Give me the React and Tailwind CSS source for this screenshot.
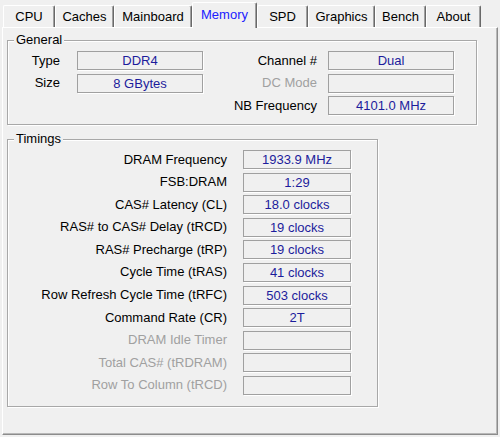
import React from 'react';

const tabs = [
  ['CPU', 52],
  ['Caches', 59],
  ['Mainboard', 78],
  ['Memory', 65, true],
  ['SPD', 51],
  ['Graphics', 67],
  ['Bench', 51],
  ['About', 55],
];

const timings = [
  ['DRAM Frequency', '1933.9 MHz'],
  ['FSB:DRAM', '1:29'],
  ['CAS# Latency (CL)', '18.0 clocks'],
  ['RAS# to CAS# Delay (tRCD)', '19 clocks'],
  ['RAS# Precharge (tRP)', '19 clocks'],
  ['Cycle Time (tRAS)', '41 clocks'],
  ['Row Refresh Cycle Time (tRFC)', '503 clocks'],
  ['Command Rate (CR)', '2T'],
  ['DRAM Idle Timer', '', true],
  ['Total CAS# (tRDRAM)', '', true],
  ['Row To Column (tRCD)', '', true],
];

function Field({ value, width }) {
  return (
    <div
      className="h-[19px] flex items-center justify-center border border-[#a0a0a0] shadow-[1px_1px_0_#ffffff] text-[#1c1c9c] leading-none"
      style={{ width }}
    >
      {value}
    </div>
  );
}

function Row({ label, value, disabled, labelW, gap, boxW }) {
  return (
    <div className="flex items-center h-[19px]">
      <div
        className={`text-right whitespace-nowrap ${disabled ? 'text-[#a0a0a0]' : 'text-black'}`}
        style={{ width: labelW, marginRight: gap }}
      >
        {label}
      </div>
      <Field value={value} width={boxW} />
    </div>
  );
}

function Group({ title, className, children }) {
  return (
    <fieldset
      className={`border border-[#a8a8a8] shadow-[1px_1px_0_#ffffff,inset_1px_1px_0_#ffffff] ${className}`}
    >
      <legend className="ml-[6px] px-[2px] h-[16px] leading-[16px] bg-[#f0f0f0] text-black">
        {title}
      </legend>
      {children}
    </fieldset>
  );
}

export default function App() {
  return (
    <div
      className="w-[500px] h-[437px] bg-[#f0f0f0] text-[13px] leading-[16px] overflow-hidden"
      style={{ fontFamily: '"Liberation Sans", Arial, sans-serif' }}
    >
      {/* tab strip */}
      <div className="flex items-end h-[28px] pl-[3px] relative z-10">
        {tabs.map(([name, w, sel]) => (
          <div
            key={name}
            className={`flex items-center justify-center border-l border-t border-white border-r border-r-[#696969] rounded-t-[2px] shadow-[inset_-1px_0_0_#a0a0a0] bg-[#f0f0f0] ${
              sel ? 'h-[26px] pb-[2px] text-[#2020ff]' : 'h-[22px] mb-[1px] pt-[1px] text-black'
            }`}
            style={{ width: w }}
          >
            {name}
          </div>
        ))}
      </div>

      {/* tab panel */}
      <div className="ml-[2px] -mt-[1px] w-[496px] h-[408px] border-l border-t border-white border-r border-b border-r-[#8c8c8c] border-b-[#8c8c8c] shadow-[inset_-1px_-1px_0_#b8b8b8]">
        <Group title="General" className="ml-[4px] mt-[4px] w-[470px]">
          <div className="flex pt-[3px] pb-[9px]">
            <div className="flex flex-col gap-[3.5px]">
              <Row label="Type" value="DDR4" labelW={52} gap={17} boxW={126} />
              <Row label="Size" value="8 GBytes" labelW={52} gap={17} boxW={126} />
            </div>
            <div className="flex flex-col gap-[3.5px] ml-[14px]">
              <Row label="Channel #" value="Dual" labelW={100} gap={11} boxW={126} />
              <Row label="DC Mode" value="" disabled labelW={100} gap={11} boxW={126} />
              <Row label="NB Frequency" value="4101.0 MHz" labelW={100} gap={11} boxW={126} />
            </div>
          </div>
        </Group>

        <Group title="Timings" className="ml-[4px] mt-[6px] w-[371px]">
          <div className="flex flex-col gap-[3.6px] pt-[3px] pb-[11px]">
            {timings.map(([l, v, d]) => (
              <Row key={l} label={l} value={v} disabled={d} labelW={219} gap={16} boxW={108} />
            ))}
          </div>
        </Group>
      </div>
    </div>
  );
}
